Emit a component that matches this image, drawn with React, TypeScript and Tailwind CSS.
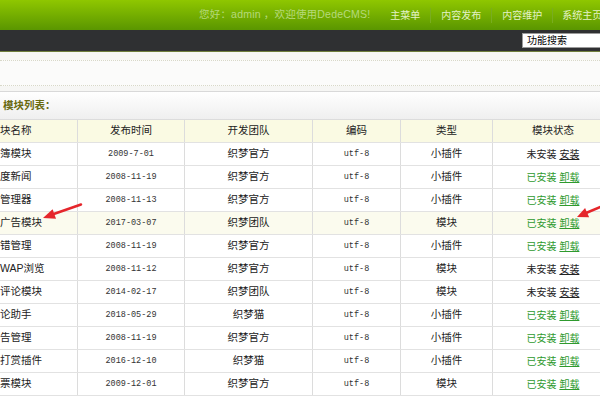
import React from "react"

type Row = {
  name: string
  date: string
  team: string
  kind: string
  installed: boolean
  hl?: boolean
}

const rows: Row[] = [
  { name: "簿模块", date: "2009-7-01", team: "织梦官方", kind: "小插件", installed: false },
  { name: "度新闻", date: "2008-11-19", team: "织梦官方", kind: "小插件", installed: true },
  { name: "管理器", date: "2008-11-13", team: "织梦官方", kind: "小插件", installed: true },
  { name: "广告模块", date: "2017-03-07", team: "织梦团队", kind: "模块", installed: true, hl: true },
  { name: "错管理", date: "2008-11-19", team: "织梦官方", kind: "小插件", installed: true },
  { name: "WAP浏览", date: "2008-11-12", team: "织梦官方", kind: "模块", installed: false },
  { name: "评论模块", date: "2014-02-17", team: "织梦团队", kind: "模块", installed: false },
  { name: "论助手", date: "2018-05-29", team: "织梦猫", kind: "小插件", installed: true },
  { name: "告管理", date: "2008-11-19", team: "织梦官方", kind: "小插件", installed: true },
  { name: "打赏插件", date: "2016-12-10", team: "织梦猫", kind: "小插件", installed: true },
  { name: "票模块", date: "2009-12-01", team: "织梦官方", kind: "模块", installed: true },
]

const cjk = "font-['Liberation_Sans','Noto_Sans_CJK_SC',sans-serif]"
const mono = "font-['Liberation_Mono','Noto_Sans_CJK_SC',monospace]"

function Cells({ cols, className }: { cols: React.ReactNode[]; className?: string }) {
  const widths = ["w-[78px] justify-start", "w-[107px]", "w-[128px]", "w-[88px]", "w-[92px]", "w-[120px]"]
  return (
    <div className={`flex h-[23px] border-b border-[#e2e2e2] ${className ?? ""}`}>
      {cols.map((c, i) => (
        <div
          key={i}
          className={`${widths[i]} shrink-0 flex items-center justify-center overflow-hidden ${i < 5 ? "border-r border-[#dcdcdc]" : ""}`}
        >
          {c}
        </div>
      ))}
    </div>
  )
}

export default function App() {
  return (
    <div className={`relative w-[600px] h-[400px] overflow-hidden bg-white ${cjk}`}>
      {/* top bar */}
      <div className="h-[30px] bg-gradient-to-b from-[#8fc700] to-[#5a9600] flex items-center">
        <div className="ml-[199px] text-[10.5px] text-[#b6d97c] whitespace-nowrap tracking-[0.2px]">
          您好：admin ，欢迎使用DedeCMS!
        </div>
        <div className="ml-[10px] flex items-center text-[10px] text-[#e4f2c6] whitespace-nowrap">
          <span className="px-[10px] border-r border-[#79ad20]">主菜单</span>
          <span className="px-[10px] border-r border-[#79ad20]">内容发布</span>
          <span className="px-[10px] border-r border-[#79ad20]">内容维护</span>
          <span className="pl-[9px]">系统主页</span>
        </div>
      </div>
      <div className="h-[22px] bg-[#2f3032] border-b border-[#6f7e3c] flex items-center justify-end">
        <div className="w-[80px] h-[15px] -mr-[2px] bg-white border border-[#9a9a9a] flex items-center pl-[4px] text-[10px] text-black">
          功能搜索
        </div>
      </div>

      {/* light band */}
      <div className="h-[40px] bg-[#f6f6f4] border-b border-[#d9d9d9] pt-[8px]">
        <div className="h-[26px] border-y border-dotted border-[#d8d8c8] bg-[#fbfbfa]" />
      </div>

      {/* title */}
      <div className="h-[27px] bg-gradient-to-b from-white to-[#efefef] flex items-center pl-[3px]">
        <span className="text-[10.5px] font-bold text-[#6a6a10]">模块列表：</span>
      </div>

      {/* table */}
      <div className="text-[10px] text-[#222]">
        <div className="border-t border-[#dcdcdc]">
          <Cells
            className="bg-[#fafae3]"
            cols={["块名称", "发布时间", "开发团队", "编码", "类型", "模块状态"].map((t, i) => (
              <span key={i} className="text-[10.5px]">{t}</span>
            ))}
          />
        </div>
        {rows.map((r, idx) => (
          <Cells
            key={idx}
            className={r.hl ? "bg-[#fbfbee]" : "bg-white"}
            cols={[
              <span className="text-[10.5px] whitespace-nowrap">{r.name}</span>,
              <span className={`${mono} text-[8.5px] text-[#333]`}>{r.date}</span>,
              <span className="text-[10.5px]">{r.team}</span>,
              <span className={`${mono} text-[8.5px] text-[#333]`}>utf-8</span>,
              <span className="text-[10.5px]">{r.kind}</span>,
              r.installed ? (
                <span className="text-[10px] text-[#2e9a2e] whitespace-nowrap">
                  已安装 <span className="underline">卸载</span>
                </span>
              ) : (
                <span className="text-[10px] text-[#222] whitespace-nowrap">
                  未安装 <span className="underline">安装</span>
                </span>
              ),
            ]}
          />
        ))}
      </div>

      {/* red arrows */}
      <svg className="absolute left-0 top-0 pointer-events-none" width="600" height="400">
        <line x1="81" y1="204.5" x2="53" y2="214.3" stroke="#e5262b" strokeWidth="2.5" strokeLinecap="round" />
        <polygon points="43,218 56,218.7 52.6,209.3" fill="#e5262b" />
        <line x1="606" y1="204.5" x2="586" y2="213" stroke="#e5262b" strokeWidth="2.5" />
        <polygon points="577,217 589.1,217.3 585.1,208.1" fill="#e5262b" />
      </svg>
    </div>
  )
}
